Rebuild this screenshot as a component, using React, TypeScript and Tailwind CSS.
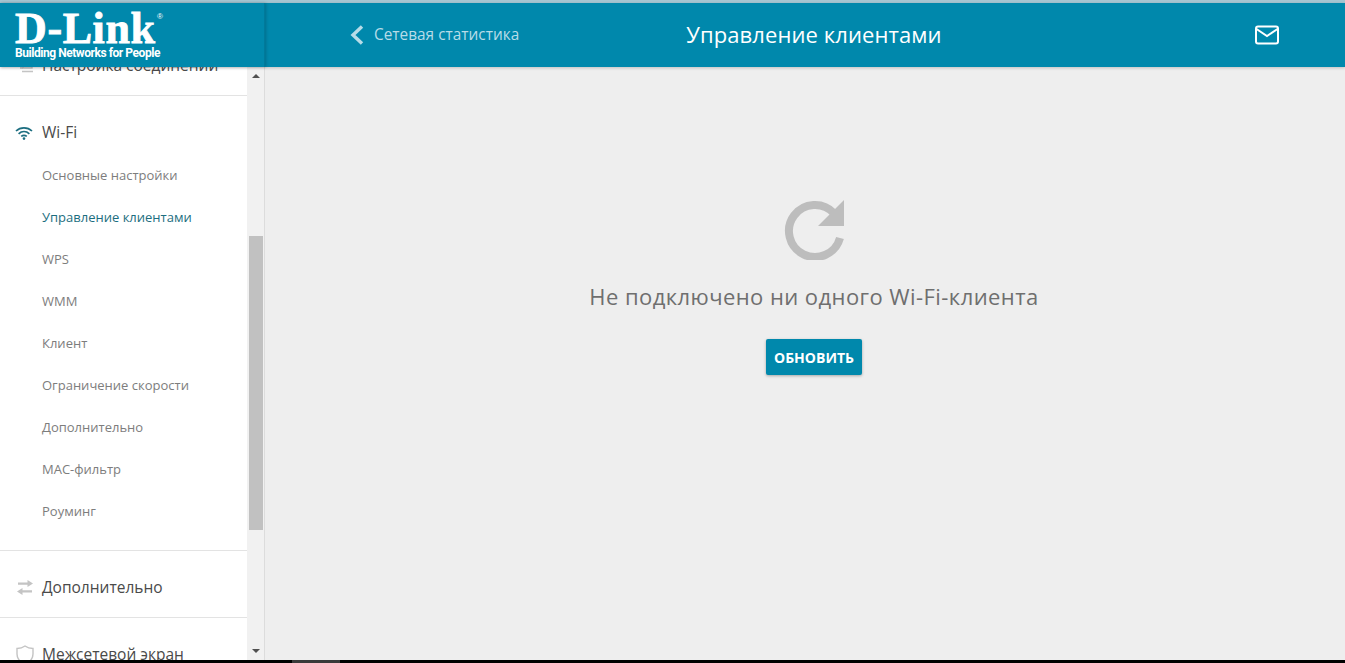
import React from 'react';

const subItems = [
  'Основные настройки',
  'Управление клиентами',
  'WPS',
  'WMM',
  'Клиент',
  'Ограничение скорости',
  'Дополнительно',
  'MAC-фильтр',
  'Роуминг',
];

function WifiIcon() {
  return (
    <svg width="18" height="14" viewBox="0 0 18 14" fill="none" stroke="#1c6e80" strokeWidth="1.7">
      <path d="M1 5 C5.5 .8 12.5 .8 17 5" />
      <path d="M3.6 7.8 C6.8 5 11.2 5 14.4 7.8" />
      <path d="M6.2 10.4 C8 9 10 9 11.8 10.4" />
      <circle cx="9" cy="12.6" r="1.3" fill="#1c6e80" stroke="none" />
    </svg>
  );
}

function SwapIcon() {
  return (
    <svg width="16" height="15" viewBox="0 0 16 15" fill="#c4c4c4">
      <path d="M1 2.5H10.5V0L16 3.5 10.5 7V4.8H1z" />
      <path d="M15 10.2H5.5V8L0 11.5 5.5 15V12.5H15z" />
    </svg>
  );
}

function ShieldIcon() {
  return (
    <svg width="18" height="20" viewBox="0 0 18 20" fill="none" stroke="#c4c4c4" strokeWidth="1.4">
      <path d="M1 3.5 C4 3.5 7 2.5 9 1 C11 2.5 14 3.5 17 3.5 V9 C17 14 13 17.5 9 19 C5 17.5 1 14 1 9 Z" />
    </svg>
  );
}

function ConnectionIcon() {
  return (
    <svg width="18" height="14" viewBox="0 0 18 14" fill="none" stroke="#c4c4c4" strokeWidth="1.4">
      <rect x="7" y="1" width="9" height="8" />
      <path d="M1 5h6M4 9h3M6 12.5h11" />
    </svg>
  );
}

function Sidebar() {
  return (
    <div className="h-[593px] w-[247px] overflow-hidden bg-white">
      <div className="-mt-[18px]">
        <div className="flex h-[47px] items-center gap-[8px] border-b border-[#e3e3e3] pb-[12px] pl-[16px]">
          <span className="flex w-[18px] justify-center"><ConnectionIcon /></span>
          <span className="text-[15.5px] text-[#4a4a4a]">Настройка соединений</span>
        </div>
        <div className="flex h-[58px] items-center gap-[8px] pt-[16px] pl-[15px]">
          <span className="flex w-[18px] justify-center"><WifiIcon /></span>
          <span className="ml-[1px] text-[15.5px] text-[#4a4a4a]">Wi-Fi</span>
        </div>
        {subItems.map((item, i) => (
          <div
            key={item}
            className={`flex h-[42px] items-center pt-[2px] pl-[42px] text-[13px] ${i === 1 ? 'text-[#1c6e80]' : 'text-[#7d7d7d]'}`}
          >
            {item}
          </div>
        ))}
        <div className="mt-[18px] flex h-[68px] items-center gap-[8px] border-y border-[#e3e3e3] pt-[7px] pl-[16px]">
          <span className="flex w-[18px] justify-center"><SwapIcon /></span>
          <span className="text-[15.5px] text-[#4a4a4a]">Дополнительно</span>
        </div>
        <div className="flex h-[72px] items-center gap-[8px] pt-[2px] pl-[16px]">
          <span className="flex w-[18px] justify-center"><ShieldIcon /></span>
          <span className="text-[15.5px] text-[#4a4a4a]">Межсетевой экран</span>
        </div>
      </div>
    </div>
  );
}

function Scrollbar() {
  return (
    <div className="flex h-[593px] w-[17px] flex-col items-center justify-between bg-[#f1f1f1] py-[7px]">
      <div className="h-0 w-0 border-x-[4px] border-b-[4px] border-x-transparent border-b-[#505050]" />
      <div className="mt-[157px] h-[294px] w-[14px] -translate-y-[1px] bg-[#c1c1c1]" />
      <div className="mt-[116px] h-0 w-0 border-x-[4px] border-t-[4px] border-x-transparent border-t-[#505050]" />
    </div>
  );
}

export default function App() {
  return (
    <div className="flex h-[663px] flex-col overflow-hidden bg-[#eeeeee] font-['Open_Sans','Liberation_Sans',sans-serif]">
      <div className="h-[3px] bg-[#a6c6d2]" />

      <header className="relative z-10 flex h-[64px] bg-[#0088ac] shadow-[0_1px_3px_rgba(0,0,0,0.2)]">
        <div className="flex h-full w-[265px] flex-col border-r border-[#007a9b] pt-[8px] pl-[15px] text-white shadow-[1px_0_3px_rgba(0,0,0,0.2)]">
          <div className="relative h-[35px] w-[145px] font-['Liberation_Serif',serif] text-[44px] leading-[35px] font-bold tracking-[0.6px] [-webkit-text-stroke:0.8px_white]">
            D-Link
            <span className="absolute top-[2px] right-[-3px] font-['Liberation_Sans',sans-serif] text-[8px] leading-[8px] font-normal tracking-normal [-webkit-text-stroke:0]">®</span>
          </div>
          <div className="font-['Roboto',sans-serif] text-[12px] leading-[15px] font-bold tracking-[-0.45px] whitespace-nowrap">Building Networks for People</div>
        </div>

        <div className="flex flex-1 items-center">
          <div className="flex w-[255px] items-center pl-[85px] text-[#b7dce8]">
            <svg width="14" height="20" viewBox="0 0 14 20" fill="none" stroke="#b7dce8" strokeWidth="3.4">
              <path d="M12 1.5 L3 10 L12 18.5" />
            </svg>
            <span className="ml-[10px] text-[15.4px] whitespace-nowrap">Сетевая статистика</span>
          </div>
          <div className="w-[588px] -translate-y-[1px] text-center text-[22px] font-medium tracking-[0.1px] text-white">Управление клиентами</div>
          <div className="flex flex-1 justify-end pr-[66px]">
            <svg width="24" height="20" viewBox="0 0 24 20" fill="none" stroke="white" strokeWidth="2">
              <rect x="1" y="1.5" width="22" height="17" rx="2" />
              <path d="M1.5 4 L12 11 L22.5 4" />
            </svg>
          </div>
        </div>
      </header>

      <div className="flex flex-1">
        <div className="flex border-r border-[#dcdcdc]">
          <Sidebar />
          <Scrollbar />
        </div>
        <main className="flex flex-1 flex-col items-center pt-[133px] pl-[18px]">
          <svg width="60" height="60" viewBox="0 0 60 60" fill="#bdbdbd">
            <path d="M50 13.3 A26 26 0 1 0 56 38" fill="none" stroke="#bdbdbd" strokeWidth="8" />
            <path d="M60 0 V26 H34 Z" />
          </svg>
          <div className="mt-[19px] text-[22px] leading-[34px] tracking-[0.43px] text-[#6f6f6f]">
            Не подключено ни одного Wi-Fi-клиента
          </div>
          <button className="mt-[26px] h-[36px] w-[96px] rounded-[2px] bg-[#0088ac] text-[14px] font-bold text-white shadow-[0_1px_3px_rgba(0,0,0,0.3)]">
            ОБНОВИТЬ
          </button>
        </main>
      </div>

      <div className="flex h-[3px] bg-black pl-[292px]">
        <div className="h-full w-[48px] bg-[#3a3a3a]" />
      </div>
    </div>
  );
}
